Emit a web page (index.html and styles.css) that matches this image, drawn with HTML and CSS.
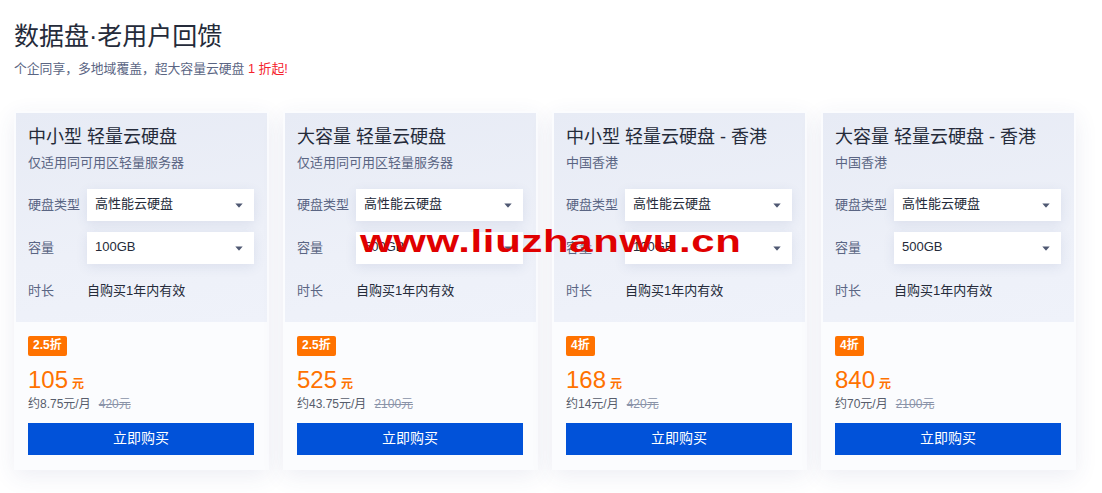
FILE: index.html
```html
<!DOCTYPE html>
<html lang="zh-CN">
<head>
<meta charset="utf-8">
<title>数据盘·老用户回馈</title>
<link rel="stylesheet" href="styles.css">
</head>
<body>
<div class="page">
  <header class="header">
    <h1 class="title">数据盘·老用户回馈</h1>
    <p class="subtitle">个企同享，多地域覆盖，超大容量云硬盘 <span class="hl">1 折起!</span></p>
  </header>

  <div class="cards">
    <div class="card">
      <div class="card-top">
        <div class="card-title">中小型 轻量云硬盘</div>
        <div class="card-sub">仅适用同可用区轻量服务器</div>
        <div class="form">
          <div class="row"><span class="label">硬盘类型</span><div class="select"><span>高性能云硬盘</span><svg class="caret" viewBox="0 0 8 5"><path d="M0.3 0.4h7.4L4.4 4.3a0.55 0.55 0 0 1-0.8 0z"/></svg></div></div>
          <div class="row"><span class="label">容量</span><div class="select"><span>100GB</span><svg class="caret" viewBox="0 0 8 5"><path d="M0.3 0.4h7.4L4.4 4.3a0.55 0.55 0 0 1-0.8 0z"/></svg></div></div>
          <div class="row"><span class="label">时长</span><span class="value">自购买1年内有效</span></div>
        </div>
      </div>
      <div class="card-bottom">
        <span class="badge">2.5折</span>
        <div class="price"><span class="num">105</span><span class="unit">元</span></div>
        <div class="monthly">约8.75元/月<span class="orig">420元</span></div>
        <button class="buy">立即购买</button>
      </div>
    </div>

    <div class="card">
      <div class="card-top">
        <div class="card-title">大容量 轻量云硬盘</div>
        <div class="card-sub">仅适用同可用区轻量服务器</div>
        <div class="form">
          <div class="row"><span class="label">硬盘类型</span><div class="select"><span>高性能云硬盘</span><svg class="caret" viewBox="0 0 8 5"><path d="M0.3 0.4h7.4L4.4 4.3a0.55 0.55 0 0 1-0.8 0z"/></svg></div></div>
          <div class="row"><span class="label">容量</span><div class="select"><span>500GB</span><svg class="caret" viewBox="0 0 8 5"><path d="M0.3 0.4h7.4L4.4 4.3a0.55 0.55 0 0 1-0.8 0z"/></svg></div></div>
          <div class="row"><span class="label">时长</span><span class="value">自购买1年内有效</span></div>
        </div>
      </div>
      <div class="card-bottom">
        <span class="badge">2.5折</span>
        <div class="price"><span class="num">525</span><span class="unit">元</span></div>
        <div class="monthly">约43.75元/月<span class="orig">2100元</span></div>
        <button class="buy">立即购买</button>
      </div>
    </div>

    <div class="card">
      <div class="card-top">
        <div class="card-title">中小型 轻量云硬盘 - 香港</div>
        <div class="card-sub">中国香港</div>
        <div class="form">
          <div class="row"><span class="label">硬盘类型</span><div class="select"><span>高性能云硬盘</span><svg class="caret" viewBox="0 0 8 5"><path d="M0.3 0.4h7.4L4.4 4.3a0.55 0.55 0 0 1-0.8 0z"/></svg></div></div>
          <div class="row"><span class="label">容量</span><div class="select"><span>100GB</span><svg class="caret" viewBox="0 0 8 5"><path d="M0.3 0.4h7.4L4.4 4.3a0.55 0.55 0 0 1-0.8 0z"/></svg></div></div>
          <div class="row"><span class="label">时长</span><span class="value">自购买1年内有效</span></div>
        </div>
      </div>
      <div class="card-bottom">
        <span class="badge">4折</span>
        <div class="price"><span class="num">168</span><span class="unit">元</span></div>
        <div class="monthly">约14元/月<span class="orig">420元</span></div>
        <button class="buy">立即购买</button>
      </div>
    </div>

    <div class="card">
      <div class="card-top">
        <div class="card-title">大容量 轻量云硬盘 - 香港</div>
        <div class="card-sub">中国香港</div>
        <div class="form">
          <div class="row"><span class="label">硬盘类型</span><div class="select"><span>高性能云硬盘</span><svg class="caret" viewBox="0 0 8 5"><path d="M0.3 0.4h7.4L4.4 4.3a0.55 0.55 0 0 1-0.8 0z"/></svg></div></div>
          <div class="row"><span class="label">容量</span><div class="select"><span>500GB</span><svg class="caret" viewBox="0 0 8 5"><path d="M0.3 0.4h7.4L4.4 4.3a0.55 0.55 0 0 1-0.8 0z"/></svg></div></div>
          <div class="row"><span class="label">时长</span><span class="value">自购买1年内有效</span></div>
        </div>
      </div>
      <div class="card-bottom">
        <span class="badge">4折</span>
        <div class="price"><span class="num">840</span><span class="unit">元</span></div>
        <div class="monthly">约70元/月<span class="orig">2100元</span></div>
        <button class="buy">立即购买</button>
      </div>
    </div>
  </div>

  <div class="watermark">www.liuzhanwu.cn</div>
</div>
</body>
</html>
```

FILE: styles.css
```css
* { box-sizing: border-box; }

html, body {
  margin: 0;
  padding: 0;
  background: #ffffff;
}

body {
  font-family: "Liberation Sans", "Noto Sans CJK SC", sans-serif;
  color: #252b3a;
}

.page {
  position: relative;
  width: 1102px;
  height: 493px;
  overflow: hidden;
}

.header {
  padding: 19px 14px 0;
}

.title {
  margin: 0;
  font-size: 25px;
  line-height: 34px;
  font-weight: 400;
  color: #252b3a;
}

.subtitle {
  margin: 6px 0 0;
  font-size: 12.8px;
  line-height: 20px;
  color: #5a6583;
}

.subtitle .hl {
  color: #f5222d;
}

.cards {
  display: flex;
  gap: 14px;
  padding: 0 14px;
  margin-top: 32px;
}

.card {
  width: 255px;
  flex: 0 0 255px;
  background: #fbfcfe;
  box-shadow: 0 6px 22px rgba(50, 70, 130, 0.09);
  display: flex;
  flex-direction: column;
}

.card-top {
  margin: 2px 2px 0;
  padding: 12px 13px 15px 12px;
  background: linear-gradient(170deg, #e7ebf5 0%, #edf0f8 60%, #eff2fa 100%);
}

.card-title {
  font-size: 18px;
  line-height: 24px;
  color: #252b3a;
  white-space: nowrap;
}

.card-sub {
  margin-top: 4px;
  font-size: 13px;
  line-height: 20px;
  color: #5a6583;
}

.form {
  margin-top: 16px;
  display: flex;
  flex-direction: column;
  gap: 11px;
}

.row {
  display: flex;
  align-items: center;
  height: 32px;
  font-size: 13px;
  line-height: 18px;
}

.label {
  width: 59px;
  flex: 0 0 59px;
  color: #5a6583;
  padding-bottom: 1px;
}

.value {
  color: #252b3a;
  padding-bottom: 1px;
}

.select {
  flex: 1;
  height: 32px;
  background: #ffffff;
  display: flex;
  align-items: center;
  justify-content: space-between;
  padding: 0 11px 0 8px;
  color: #252b3a;
  box-shadow: 0 3px 12px rgba(60, 80, 140, 0.10);
}

.select span {
  padding-bottom: 2px;
}

.caret {
  width: 8px;
  height: 5px;
  fill: #4f5872;
}

.card-bottom {
  padding: 14px 15px 15px 14px;
  display: flex;
  flex-direction: column;
  align-items: flex-start;
}

.badge {
  display: inline-block;
  height: 20px;
  line-height: 19px;
  padding: 0 5px;
  background: #ff7200;
  color: #ffffff;
  font-size: 12px;
  font-weight: 700;
  border-radius: 2px;
}

.price {
  margin-top: 8px;
  height: 32px;
  display: flex;
  align-items: baseline;
  color: #ff7200;
  line-height: 32px;
}

.price .num {
  font-size: 24px;
}

.price .unit {
  font-size: 12px;
  font-weight: 700;
  margin-left: 4px;
}

.monthly {
  font-size: 12px;
  line-height: 16px;
  color: #575d6c;
}

.orig {
  margin-left: 8px;
  color: #8a93a8;
  text-decoration: line-through;
}

.buy {
  margin-top: 11px;
  width: 226px;
  height: 32px;
  border: 0;
  border-radius: 0;
  background: #0152d9;
  color: #ffffff;
  font-family: "Liberation Sans", "Noto Sans CJK SC", sans-serif;
  font-size: 14px;
  padding: 0 0 5px;
  cursor: pointer;
}

.watermark {
  position: absolute;
  left: 360px;
  top: 221px;
  font-family: "Liberation Sans", sans-serif;
  font-weight: 700;
  font-size: 32px;
  line-height: 40px;
  color: #e00000;
  letter-spacing: 0.5px;
  transform: scaleX(1.31);
  transform-origin: left top;
  white-space: nowrap;
}
```
